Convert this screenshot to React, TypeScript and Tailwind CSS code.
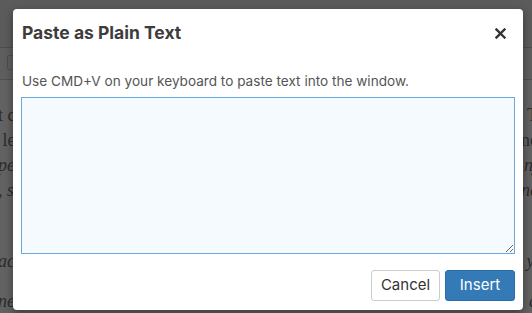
import React from "react";

const rows: { top: number; left: string; right: string; italic?: boolean }[] = [
  { top: 104, left: "t c", right: "T" },
  { top: 129, left: " le", right: "ne" },
  { top: 154, left: "pe", right: "nj", italic: true },
  { top: 179, left: ", s", right: "ne", italic: true },
  { top: 250, left: "act", right: "y.", italic: true },
  { top: 290, left: "ne", right: "a", italic: true },
];

export default function App() {
  return (
    <div className="relative w-[532px] h-[313px] overflow-hidden bg-[#626262]" style={{ fontFamily: "Inter, 'Liberation Sans', sans-serif" }}>
      {/* background page */}
      <div className="h-[48px] bg-[#5b5b5b] border-b border-[#4e4e4e]" />
      <div className="h-[32px] border-b border-[#505050] bg-[#5e5e5e] pl-[7px] pt-[7px]">
        <div className="w-[10px] h-[15px] border border-[#4e4e4e] rounded-[2px]" />
      </div>
      <div className="relative text-[#2c2c2c] text-[18px]" style={{ fontFamily: "'Liberation Serif', serif" }}>
        {rows.map((r, i) => (
          <div key={i} className={"absolute left-0 right-0 flex justify-between leading-[22px] " + (r.italic ? "italic" : "")} style={{ top: r.top - 80 }}>
            <span className="-ml-[2px] whitespace-pre">{r.left}</span>
            <span className="-mr-[6px] whitespace-pre">{r.right}</span>
          </div>
        ))}
      </div>

      {/* modal */}
      <div className="absolute left-[13px] top-[9px] w-[510px] h-[301px] bg-white rounded-[4px] shadow-[0_3px_9px_rgba(0,0,0,0.4)] flex flex-col">
        <div className="h-[48px] flex items-center justify-between pl-[9px] pr-[17px]">
          <h1 className="text-[17.5px] font-bold text-[#3d3d3d]">Paste as Plain Text</h1>
          <svg width="11" height="11" viewBox="0 0 11 11">
            <path d="M1.5 1.5 L9.5 9.5 M9.5 1.5 L1.5 9.5" stroke="#333" strokeWidth="2.4" strokeLinecap="square" />
          </svg>
        </div>
        <div className="px-[8px] pt-[15px]">
          <p className="pl-[1px] text-[13.6px] leading-[18px] text-[#555]">Use CMD+V on your keyboard to paste text into the window.</p>
          <textarea className="mt-[7px] block w-full h-[157px] border border-[#6ba9dd] bg-[#f5faff] outline-none resize-y" />
        </div>
        <div className="flex justify-end gap-[5px] px-[8px] pt-[16px]">
          <button className="h-[31px] w-[69px] border border-[#cccccc] rounded-[3px] bg-white text-[15px] text-[#333]">Cancel</button>
          <button className="h-[31px] w-[70px] border border-[#2e6da4] rounded-[3px] bg-[#337ab7] text-[15px] text-white">Insert</button>
        </div>
      </div>
    </div>
  );
}
